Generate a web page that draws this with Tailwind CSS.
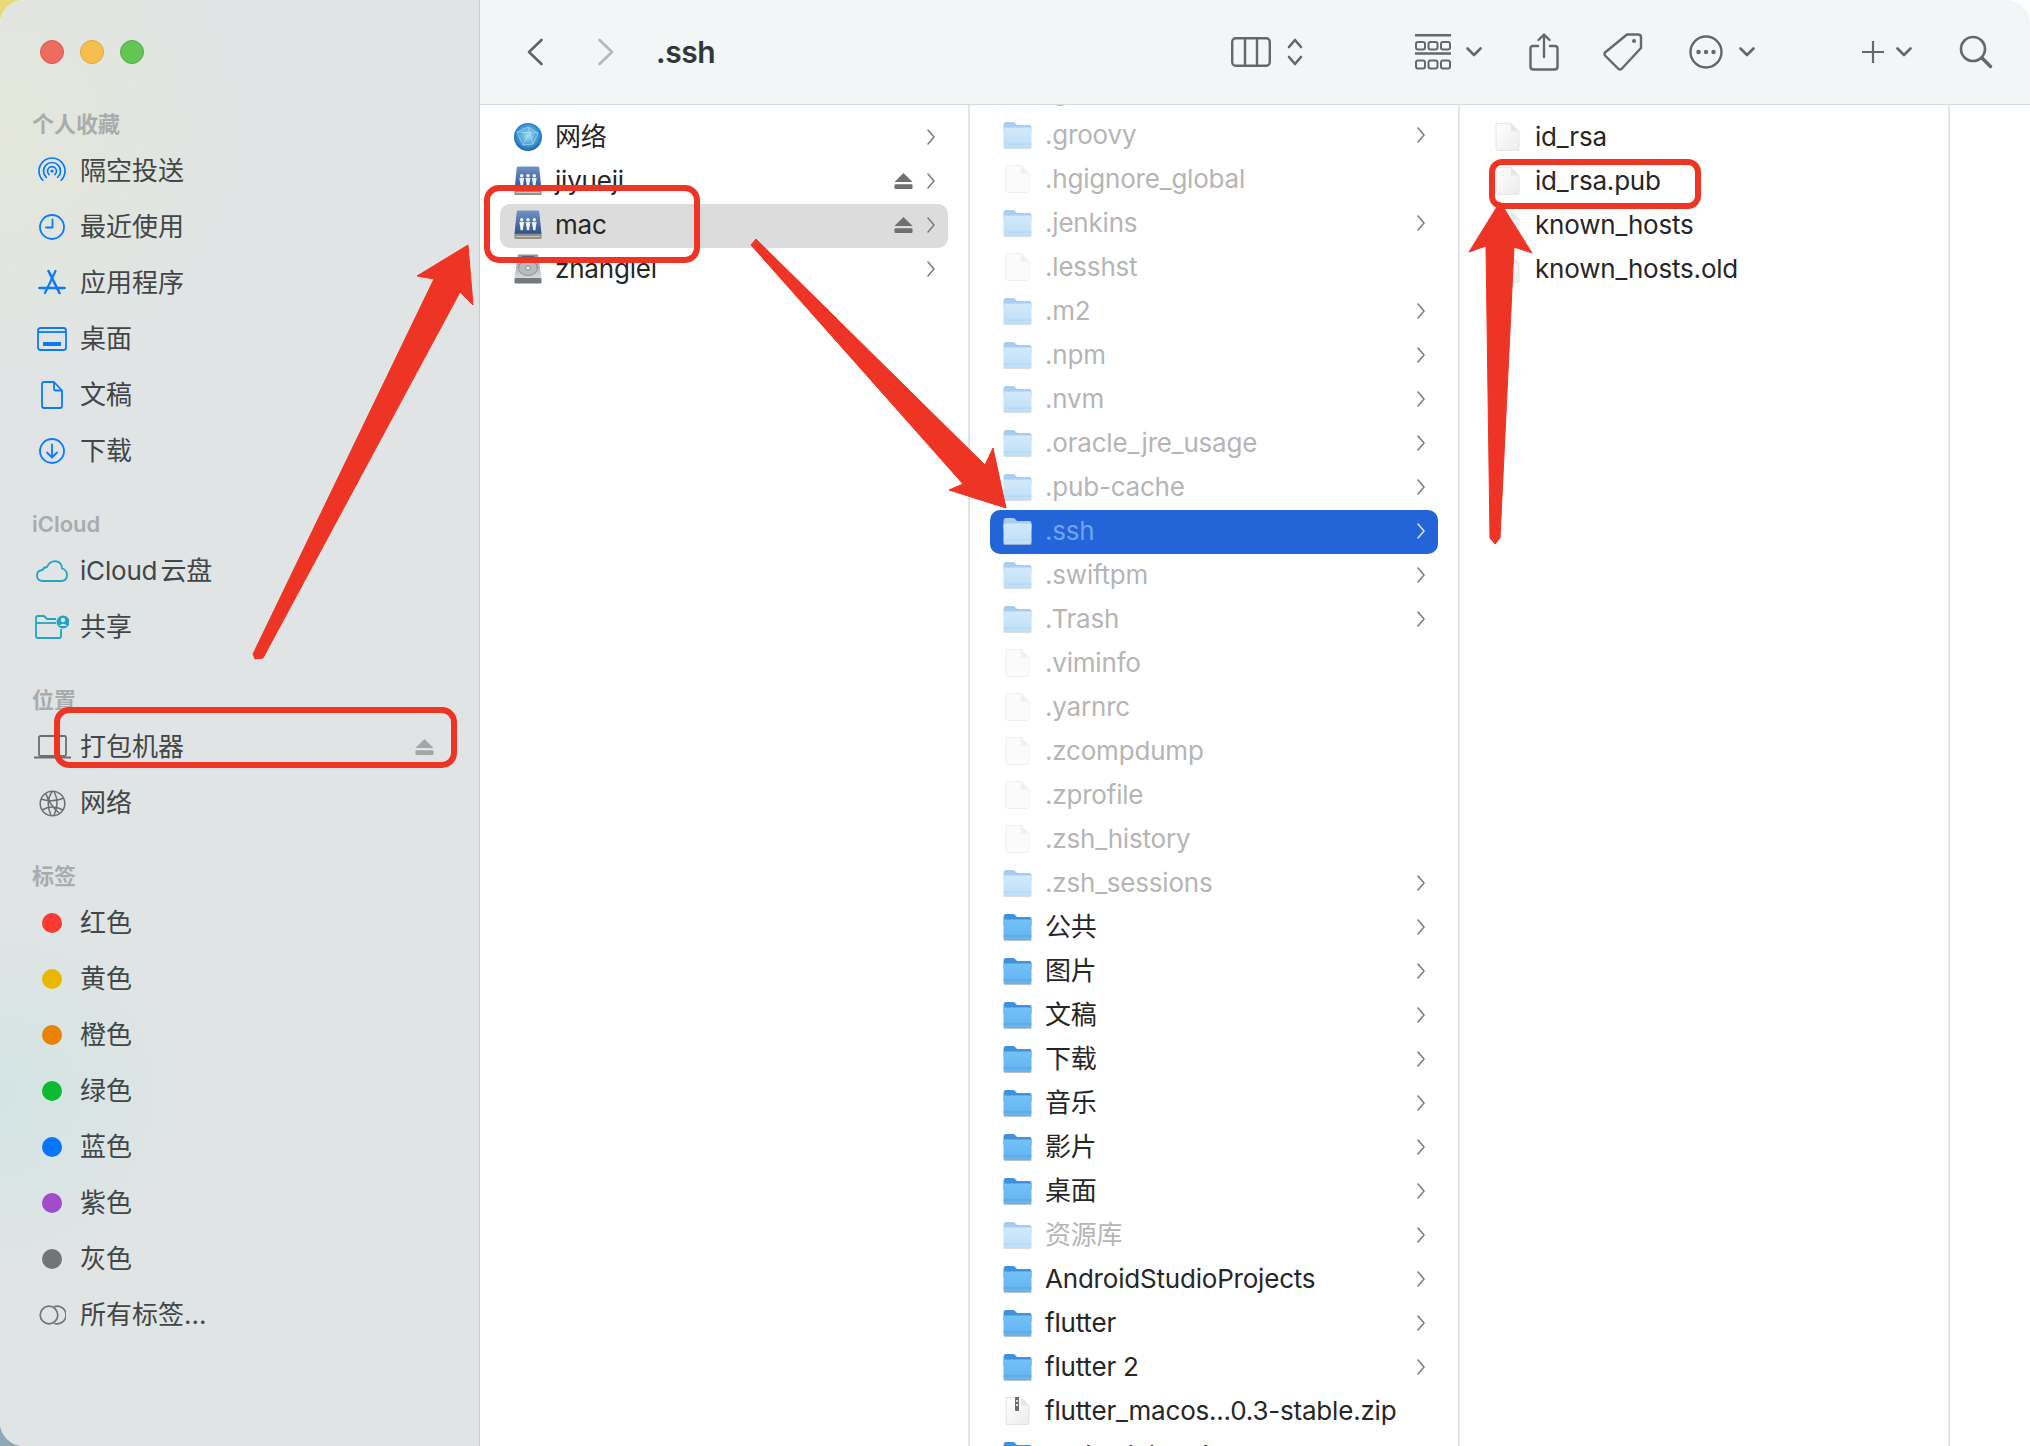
<!DOCTYPE html>
<html lang="zh-CN">
<head>
  <meta charset="UTF-8">
  <title>.ssh</title>
  <script src="https://cdn.jsdelivr.net/npm/@tailwindcss/browser@4"></script>
</head>
<body class="w-[2030px] h-[1446px] overflow-hidden relative bg-[radial-gradient(circle_at_0_0,#e7d97c_24px,transparent_25px),radial-gradient(circle_at_0_100%,#8ea9b4_24px,#ffffff_25px)] font-['Inter','Noto_Sans_CJK_SC',sans-serif]">
  <!-- shared icons: must not be display:none or the gradients stop resolving -->
  <svg class="absolute w-0 h-0">
    <defs>
      <linearGradient id="folderBody" x1="0" y1="0" x2="0" y2="1"><stop offset="0" stop-color="#74c1f7"/><stop offset="1" stop-color="#64b3f0"/></linearGradient>
      <linearGradient id="folderDim" x1="0" y1="0" x2="0" y2="1"><stop offset="0" stop-color="#d2e9fb"/><stop offset="1" stop-color="#bfdff7"/></linearGradient>
      <linearGradient id="fileBody" x1="0" y1="0" x2="1" y2="1"><stop offset="0" stop-color="#ffffff"/><stop offset="1" stop-color="#ececec"/></linearGradient>
      <linearGradient id="serverBody" x1="0" y1="0" x2="0" y2="1"><stop offset="0" stop-color="#7092c4"/><stop offset="1" stop-color="#2f4f88"/></linearGradient>
      <linearGradient id="diskBody" x1="0" y1="0" x2="0" y2="1"><stop offset="0" stop-color="#8d9396"/><stop offset="1" stop-color="#d5d9db"/></linearGradient>
      <radialGradient id="globeBody" cx="0.5" cy="0.45" r="0.6"><stop offset="0" stop-color="#9fe0ee"/><stop offset="0.6" stop-color="#3c9ad6"/><stop offset="1" stop-color="#14519f"/></radialGradient>
    </defs>
    <symbol id="folder" viewBox="0 0 29 28">
      <rect x="0.5" y="25" width="28" height="3" rx="1.5" fill="#8b99a3" opacity="0.6"/>
      <path d="M0.5 5 Q0.5 1 3 1 H10 Q12 1 13 3 L14 4 H26.5 Q28.5 4 28.5 6 V12 H0.5Z" fill="#3f91dc"/>
      <path d="M0.5 8 Q0.5 6.5 2 6.5 H27 Q28.5 6.5 28.5 8 V25 Q28.5 27 26.5 27 H2.5 Q0.5 27 0.5 25Z" fill="url(#folderBody)"/>
      <path d="M0.5 23 H28.5" stroke="#4f9fe0" stroke-width="0.8"/>
    </symbol>
    <symbol id="folder-dim" viewBox="0 0 29 28">
      <rect x="0.5" y="25" width="28" height="3" rx="1.5" fill="#c5ced4" opacity="0.7"/>
      <path d="M0.5 5 Q0.5 1 3 1 H10 Q12 1 13 3 L14 4 H26.5 Q28.5 4 28.5 6 V12 H0.5Z" fill="#a9cdee"/>
      <path d="M0.5 8 Q0.5 6.5 2 6.5 H27 Q28.5 6.5 28.5 8 V25 Q28.5 27 26.5 27 H2.5 Q0.5 27 0.5 25Z" fill="url(#folderDim)"/>
      <path d="M0.5 23 H28.5" stroke="#add4f2" stroke-width="0.8"/>
    </symbol>
    <symbol id="file" viewBox="0 0 29 30">
      <path d="M3 1.5 H18 L26 9.5 V27 Q26 28.5 24.5 28.5 H4.5 Q3 28.5 3 27Z" fill="url(#fileBody)" stroke="#e0e0e0" stroke-width="0.8"/>
      <path d="M18 1.5 V8 Q18 9.5 19.5 9.5 H26Z" fill="#e6e6e6"/>
    </symbol>
    <symbol id="file-dim" viewBox="0 0 29 30">
      <path d="M3 1.5 H18 L26 9.5 V27 Q26 28.5 24.5 28.5 H4.5 Q3 28.5 3 27Z" fill="#fbfbfb" stroke="#eeeeee" stroke-width="0.8"/>
      <path d="M18 1.5 V8 Q18 9.5 19.5 9.5 H26Z" fill="#f0f0f0"/>
    </symbol>
    <symbol id="zip" viewBox="0 0 29 30">
      <path d="M3 1.5 H18 L26 9.5 V27 Q26 28.5 24.5 28.5 H4.5 Q3 28.5 3 27Z" fill="url(#fileBody)" stroke="#dddddd" stroke-width="0.8"/>
      <path d="M18 1.5 V8 Q18 9.5 19.5 9.5 H26Z" fill="#e6e6e6"/>
      <rect x="12" y="1" width="4" height="14" rx="1" fill="#6c6c6c"/>
      <rect x="13" y="4" width="2" height="2" fill="#dddddd"/><rect x="13" y="8" width="2" height="2" fill="#dddddd"/>
    </symbol>
    <symbol id="chev" viewBox="0 0 10 18">
      <path d="M2 2 L8 9 L2 16" fill="none" stroke="currentColor" stroke-width="1.6" stroke-linecap="round" stroke-linejoin="round"/>
    </symbol>
    <symbol id="eject" viewBox="0 0 20 18">
      <path d="M10 0.5 L19.5 10 H0.5Z" fill="currentColor"/>
      <rect x="0.5" y="12.5" width="19" height="5" rx="1.2" fill="currentColor"/>
    </symbol>
    <symbol id="caret" viewBox="0 0 16 10">
      <path d="M1.5 1.5 L8 8 L14.5 1.5" fill="none" stroke="#646869" stroke-width="2.6" stroke-linecap="round" stroke-linejoin="round"/>
    </symbol>
    <symbol id="server" viewBox="0 0 29 31">
      <path d="M4.5 0.5 H24.5 Q26 0.5 26.2 2 L28.5 25 H0.5 L2.8 2 Q3 0.5 4.5 0.5Z" fill="url(#serverBody)"/>
      <rect x="0.5" y="24.5" width="28" height="5.5" rx="1" fill="#8f8f85"/>
      <rect x="2" y="27" width="25" height="1" fill="#cfcfc6"/>
      <g fill="#eef3fa">
        <circle cx="8" cy="10" r="1.8"/><circle cx="14.5" cy="10" r="1.8"/><circle cx="21" cy="10" r="1.8"/>
        <path d="M5.5 12.5 H10.5 L9.5 18 L9.2 21 H6.8 L6.5 18Z"/>
        <path d="M12 12.5 H17 L16 18 L15.7 21 H13.3 L13 18Z"/>
        <path d="M18.5 12.5 H23.5 L22.5 18 L22.2 21 H19.8 L19.5 18Z"/>
      </g>
    </symbol>
  </svg>

  <div class="w-[2030px] h-[1446px] rounded-[24px] overflow-hidden flex bg-white">
    <!-- sidebar -->
    <aside class="w-[480px] shrink-0 border-r border-[#c9cccc] bg-[#e0e4e5] bg-[radial-gradient(circle_at_0_130px,#e4e7da_0,transparent_260px),radial-gradient(circle_at_0_1095px,#d3e4e4_0,transparent_175px)] pl-[32px] text-[26px] leading-[36px] text-[#434647]">
      <div class="h-[106px] pt-[40px] pl-[8px] flex gap-[16px]">
        <span class="size-[24px] rounded-full bg-[#ee6b62] border border-[#d9584f]"></span>
        <span class="size-[24px] rounded-full bg-[#f6bd4f] border border-[#e0a63c]"></span>
        <span class="size-[24px] rounded-full bg-[#62c554] border border-[#4fae44]"></span>
      </div>

      <h2 class="h-[36px] flex items-center text-[22px] font-semibold text-[#a9acac]">个人收藏</h2>
      <div class="mt-px">
        <div class="h-[56px] flex items-center gap-[8px]"><span class="w-10 flex justify-center"><svg class="size-[28px]" viewBox="0 0 28 28" fill="none" stroke="#0a7aff" stroke-width="1.7" stroke-linecap="round"><path d="M4.8 23.2 A13 13 0 1 1 23.2 23.2"/><path d="M8.4 20.4 A8.5 8.5 0 1 1 19.6 20.4"/><path d="M11 17.5 A4.5 4.5 0 1 1 17 17.5"/><circle cx="14" cy="14" r="1.6" fill="#0a7aff" stroke="none"/></svg></span>隔空投送</div>
        <div class="h-[56px] flex items-center gap-[8px]"><span class="w-10 flex justify-center"><svg class="size-[28px]" viewBox="0 0 28 28" fill="none" stroke="#0a7aff" stroke-width="1.8" stroke-linecap="round" stroke-linejoin="round"><circle cx="14" cy="14" r="12"/><path d="M14.5 6.5 V14.5 H8"/></svg></span>最近使用</div>
        <div class="h-[56px] flex items-center gap-[8px]"><span class="w-10 flex justify-center"><svg class="size-[28px]" viewBox="0 0 28 28" fill="none" stroke="#0a7aff" stroke-width="2.6" stroke-linecap="round"><path d="M10.5 2 L21.5 24"/><path d="M17.5 2 L7 24" stroke-width="2.2"/><path d="M1.5 19 H26.5" stroke-width="2.6"/></svg></span>应用程序</div>
        <div class="h-[56px] flex items-center gap-[8px]"><span class="w-10 flex justify-center"><svg class="w-[30px] h-[24px]" viewBox="0 0 30 24" fill="none" stroke="#0a7aff" stroke-width="1.8"><rect x="1" y="1" width="28" height="22" rx="2.5"/><path d="M1 5 H29"/><rect x="6" y="15" width="18" height="4" fill="#0a7aff" stroke="none"/></svg></span>桌面</div>
        <div class="h-[56px] flex items-center gap-[8px]"><span class="w-10 flex justify-center"><svg class="w-[22px] h-[28px]" viewBox="0 0 22 28" fill="none" stroke="#0a7aff" stroke-width="1.8" stroke-linejoin="round"><path d="M1 3 Q1 1 3 1 H13 L21 9.5 V25 Q21 27 19 27 H3 Q1 27 1 25Z"/><path d="M13 1 V8 Q13 9.5 14.5 9.5 H21"/></svg></span>文稿</div>
        <div class="h-[56px] flex items-center gap-[8px]"><span class="w-10 flex justify-center"><svg class="size-[28px]" viewBox="0 0 28 28" fill="none" stroke="#0a7aff" stroke-width="1.8" stroke-linecap="round" stroke-linejoin="round"><circle cx="14" cy="14" r="12"/><path d="M14 7.5 V20 M9 15.5 L14 20.5 L19 15.5"/></svg></span>下载</div>
      </div>

      <h2 class="mt-[27px] h-[36px] flex items-center text-[22px] font-semibold text-[#a9acac]">iCloud</h2>
      <div class="mt-px">
        <div class="h-[56px] flex items-center gap-[8px]"><span class="w-10 flex justify-center"><svg class="w-[32px] h-[22px]" viewBox="0 0 32 22" fill="none" stroke="#22a5c2" stroke-width="1.8" stroke-linejoin="round"><path d="M7 21 Q1 21 1 15.5 Q1 10.5 6.5 10 Q8 7 11 7 Q13 2 18.5 1.2 Q25.5 1.2 26 8.5 Q31 10 31 15 Q31 21 25 21Z"/></svg></span><span class="tracking-[-0.2px] [word-spacing:-4px]">iCloud 云盘</span></div>
        <div class="h-[56px] flex items-center gap-[8px]"><span class="w-10 flex justify-center"><svg class="w-[34px] h-[24px]" viewBox="0 0 34 24" fill="none" stroke="#22a5c2" stroke-width="1.8" stroke-linejoin="round"><path d="M26 14 V21 Q26 23 24 23 H3 Q1 23 1 21 V3 Q1 1 3 1 H9 L12 4 H21"/><path d="M1 8 H21"/><circle cx="28" cy="7" r="6.5" fill="#22a5c2" stroke="none"/><circle cx="28" cy="5" r="2.2" fill="#e0e4e5" stroke="none"/><path d="M24 11 Q28 6.5 32 11Z" fill="#e0e4e5" stroke="none"/></svg></span>共享</div>
      </div>

      <h2 class="mt-[27px] h-[36px] flex items-center text-[22px] font-semibold text-[#a9acac]">位置</h2>
      <div class="mt-px">
        <div class="h-[56px] flex items-center gap-[8px] pr-[45px]"><span class="w-10 flex justify-center"><svg class="w-[37px] h-[24px]" viewBox="0 0 37 24" fill="none" stroke="#6b6e6f" stroke-width="1.8"><rect x="5" y="1" width="27" height="20" rx="1.5"/><path d="M0 22.5 H37" stroke-width="2.2"/></svg></span><span class="flex-1">打包机器</span><svg class="w-[19px] h-[18px] text-[#a3a6a7]"><use href="#eject"/></svg></div>
        <div class="h-[56px] flex items-center gap-[8px]"><span class="w-10 flex justify-center"><svg class="size-[27px]" viewBox="0 0 27 27" fill="none" stroke="#6b6e6f" stroke-width="1.5"><circle cx="13.5" cy="13.5" r="12.3"/><path d="M2 9 Q13 13 25 8 M3 20 Q13 14 24 20 M13 1.5 Q6 12 12 25.5 M15 1.5 Q21 12 15 25.5 M7 4 Q10 14 20 23"/></svg></span>网络</div>
      </div>

      <h2 class="mt-[27px] h-[36px] flex items-center text-[22px] font-semibold text-[#a9acac]">标签</h2>
      <div class="mt-px">
        <div class="h-[56px] flex items-center gap-[8px]"><span class="w-10 flex justify-center"><span class="size-[20px] rounded-full bg-[#fb3b30]"></span></span>红色</div>
        <div class="h-[56px] flex items-center gap-[8px]"><span class="w-10 flex justify-center"><span class="size-[20px] rounded-full bg-[#e8b800]"></span></span>黄色</div>
        <div class="h-[56px] flex items-center gap-[8px]"><span class="w-10 flex justify-center"><span class="size-[20px] rounded-full bg-[#e88200]"></span></span>橙色</div>
        <div class="h-[56px] flex items-center gap-[8px]"><span class="w-10 flex justify-center"><span class="size-[20px] rounded-full bg-[#0dbb33]"></span></span>绿色</div>
        <div class="h-[56px] flex items-center gap-[8px]"><span class="w-10 flex justify-center"><span class="size-[20px] rounded-full bg-[#0a75ff]"></span></span>蓝色</div>
        <div class="h-[56px] flex items-center gap-[8px]"><span class="w-10 flex justify-center"><span class="size-[20px] rounded-full bg-[#a24ccb]"></span></span>紫色</div>
        <div class="h-[56px] flex items-center gap-[8px]"><span class="w-10 flex justify-center"><span class="size-[20px] rounded-full bg-[#737378]"></span></span>灰色</div>
        <div class="h-[56px] flex items-center gap-[8px]"><span class="w-10 flex justify-center"><svg class="w-[27px] h-[20px]" viewBox="0 0 27 20" fill="none" stroke="#727576" stroke-width="1.7"><circle cx="10" cy="10" r="8.8"/><path d="M15 1.8 A8.8 8.8 0 1 1 15 18.2"/></svg></span>所有标签...</div>
      </div>
    </aside>

    <main class="flex-1 min-w-0 flex flex-col">
      <!-- toolbar -->
      <header class="h-[105px] shrink-0 relative z-10 bg-[#f3f6f7] border-b border-[#d8dbdb] flex items-center pl-[46px] text-[#646869]">
        <svg class="w-[18px] h-[28px]" viewBox="0 0 18 28" fill="none" stroke="#5f6364" stroke-width="2.6" stroke-linecap="round" stroke-linejoin="round"><path d="M15.5 2 L3 14 L15.5 26"/></svg>
        <svg class="w-[18px] h-[28px] ml-[53px]" viewBox="0 0 18 28" fill="none" stroke="#b3b7b8" stroke-width="2.6" stroke-linecap="round" stroke-linejoin="round"><path d="M2.5 2 L15 14 L2.5 26"/></svg>
        <h1 class="ml-[41px] w-[575px] text-[30px] font-semibold tracking-[-0.4px] text-[#33373a]">.ssh</h1>
        <svg class="w-[40px] h-[30px]" viewBox="0 0 40 30" fill="none" stroke="#646869" stroke-width="2.4"><rect x="1.2" y="1.2" width="37.6" height="27.6" rx="3.5"/><path d="M14 1.2 V28.8 M26 1.2 V28.8"/></svg>
        <svg class="w-[16px] h-[30px] ml-[16px]" viewBox="0 0 16 30" fill="none" stroke="#646869" stroke-width="2.6" stroke-linecap="round" stroke-linejoin="round"><path d="M2 10 L8 3 L14 10 M2 20 L8 27 L14 20"/></svg>
        <svg class="w-[36px] h-[36px] ml-[112px]" viewBox="0 0 36 36" fill="none" stroke="#646869" stroke-width="2"><path d="M0 1.2 H36 M0 19.5 H36" stroke-width="2.4"/><rect x="1" y="8" width="9" height="7.5" rx="2"/><rect x="13.5" y="8" width="9" height="7.5" rx="2"/><rect x="26" y="8" width="9" height="7.5" rx="2"/><rect x="1" y="26.5" width="9" height="8" rx="2"/><rect x="13.5" y="26.5" width="9" height="8" rx="2"/><rect x="26" y="26.5" width="9" height="8" rx="2"/></svg>
        <svg class="w-[16px] h-[10px] ml-[15px]"><use href="#caret"/></svg>
        <svg class="w-[30px] h-[38px] ml-[47px]" viewBox="0 0 30 38" fill="none" stroke="#646869" stroke-width="2.4" stroke-linecap="round" stroke-linejoin="round"><path d="M9 13 H4 Q1.5 13 1.5 15.5 V33.5 Q1.5 36.5 4.5 36.5 H25.5 Q28.5 36.5 28.5 33.5 V15.5 Q28.5 13 26 13 H21"/><path d="M15 24 V2 M9.5 7 L15 1.5 L20.5 7"/></svg>
        <svg class="w-[40px] h-[38px] ml-[44px]" viewBox="0 0 40 38" fill="none" stroke="#646869" stroke-width="2.4" stroke-linejoin="round"><path d="M24 1.5 H35 Q38 1.5 38 4.5 V15 L18.5 36 Q17 37 15.5 36 L2 22.5 Q1 21 2 19.5Z"/><circle cx="31" cy="8" r="2" fill="#646869" stroke="none"/></svg>
        <svg class="size-[34px] ml-[46px]" viewBox="0 0 34 34" fill="none"><circle cx="17" cy="17" r="15.5" stroke="#646869" stroke-width="2.4"/><circle cx="9.5" cy="17" r="2.2" fill="#646869"/><circle cx="17" cy="17" r="2.2" fill="#646869"/><circle cx="24.5" cy="17" r="2.2" fill="#646869"/></svg>
        <svg class="w-[16px] h-[10px] ml-[16px]"><use href="#caret"/></svg>
        <svg class="size-[22px] ml-[107px]" viewBox="0 0 22 22" fill="none" stroke="#646869" stroke-width="2.2"><path d="M11 0 V22 M0 11 H22"/></svg>
        <svg class="w-[16px] h-[10px] ml-[12px]"><use href="#caret"/></svg>
        <svg class="size-[34px] ml-[47px]" viewBox="0 0 34 34" fill="none" stroke="#646869" stroke-linecap="round"><circle cx="14" cy="14" r="12" stroke-width="2.6"/><path d="M23 23 L31.5 31.5" stroke-width="3.4"/></svg>
      </header>

      <div class="flex-1 min-h-0 flex text-[26px] leading-[36px] tracking-[-0.2px] text-[#262626]">
        <!-- column 1 -->
        <section class="w-[490px] shrink-0 border-r-2 border-[#e4e4e4] pt-[11px] px-[20px]">
          <div class="h-[44px] pb-[2px] flex items-center pl-[14px] pr-[12px] gap-[13px]">
            <svg class="size-[28px]" viewBox="0 0 28 28" fill="none"><circle cx="14" cy="14" r="14" fill="url(#globeBody)"/><path d="M3 9 L14 4 L24 10 L19 21 L9 22 L3 9 M14 4 L19 21 M3 9 L24 10 M9 22 L14 12" stroke="#d8f1fa" stroke-width="0.7" opacity="0.7"/></svg>
            <span class="flex-1">网络</span>
            <svg class="w-[10px] h-[18px] text-[#7e7e7e]"><use href="#chev"/></svg>
          </div>
          <div class="h-[44px] pb-[2px] flex items-center pl-[14px] pr-[12px] gap-[13px]">
            <svg class="w-[28px] h-[30px]"><use href="#server"/></svg>
            <span class="flex-1">jiyueji</span>
            <svg class="w-[19px] h-[18px] text-[#6f6f6f]"><use href="#eject"/></svg>
            <svg class="w-[10px] h-[18px] text-[#7e7e7e]"><use href="#chev"/></svg>
          </div>
          <div class="h-[44px] pb-[2px] flex items-center pl-[14px] pr-[12px] gap-[13px] rounded-[10px] bg-[#dcdcdc]">
            <svg class="w-[28px] h-[30px]"><use href="#server"/></svg>
            <span class="flex-1">mac</span>
            <svg class="w-[19px] h-[18px] text-[#6f6f6f]"><use href="#eject"/></svg>
            <svg class="w-[10px] h-[18px] text-[#7e7e7e]"><use href="#chev"/></svg>
          </div>
          <div class="h-[44px] pb-[2px] flex items-center pl-[14px] pr-[12px] gap-[13px]">
            <svg class="w-[28px] h-[30px]" viewBox="0 0 28 30" fill="none"><path d="M4 0.5 H24 L27.5 24 H0.5Z" fill="url(#diskBody)"/><rect x="0.5" y="24" width="27" height="5.5" rx="1" fill="#77797a"/><rect x="8" y="2" width="12" height="3" fill="#5f6264"/><ellipse cx="14" cy="14" rx="9.5" ry="7.5" fill="#b6bbbd" stroke="#8c9193"/><ellipse cx="14" cy="14" rx="2.5" ry="2" fill="#e8eaea" stroke="#8c9193"/></svg>
            <span class="flex-1">zhanglei</span>
            <svg class="w-[10px] h-[18px] text-[#7e7e7e]"><use href="#chev"/></svg>
          </div>
        </section>

        <!-- column 2, scrolled -->
        <section class="w-[490px] shrink-0 border-r-2 border-[#e4e4e4] px-[20px] overflow-hidden">
          <div class="-mt-[35px]">
            <div class="h-[44px] pb-[2px] flex items-center pl-[13px] pr-[12px] gap-[13px] text-[#b5b5b5]"><svg class="w-[29px] h-[28px]"><use href="#folder-dim"/></svg><span class="flex-1">.gradle</span><svg class="w-[10px] h-[18px] text-[#7e7e7e]"><use href="#chev"/></svg></div>
            <div class="h-[44px] pb-[2px] flex items-center pl-[13px] pr-[12px] gap-[13px] text-[#b5b5b5]"><svg class="w-[29px] h-[28px]"><use href="#folder-dim"/></svg><span class="flex-1">.groovy</span><svg class="w-[10px] h-[18px] text-[#7e7e7e]"><use href="#chev"/></svg></div>
            <div class="h-[44px] pb-[2px] flex items-center pl-[13px] pr-[12px] gap-[13px] text-[#b5b5b5]"><svg class="w-[29px] h-[30px]"><use href="#file-dim"/></svg><span class="flex-1">.hgignore_global</span></div>
            <div class="h-[44px] pb-[2px] flex items-center pl-[13px] pr-[12px] gap-[13px] text-[#b5b5b5]"><svg class="w-[29px] h-[28px]"><use href="#folder-dim"/></svg><span class="flex-1">.jenkins</span><svg class="w-[10px] h-[18px] text-[#7e7e7e]"><use href="#chev"/></svg></div>
            <div class="h-[44px] pb-[2px] flex items-center pl-[13px] pr-[12px] gap-[13px] text-[#b5b5b5]"><svg class="w-[29px] h-[30px]"><use href="#file-dim"/></svg><span class="flex-1">.lesshst</span></div>
            <div class="h-[44px] pb-[2px] flex items-center pl-[13px] pr-[12px] gap-[13px] text-[#b5b5b5]"><svg class="w-[29px] h-[28px]"><use href="#folder-dim"/></svg><span class="flex-1">.m2</span><svg class="w-[10px] h-[18px] text-[#7e7e7e]"><use href="#chev"/></svg></div>
            <div class="h-[44px] pb-[2px] flex items-center pl-[13px] pr-[12px] gap-[13px] text-[#b5b5b5]"><svg class="w-[29px] h-[28px]"><use href="#folder-dim"/></svg><span class="flex-1">.npm</span><svg class="w-[10px] h-[18px] text-[#7e7e7e]"><use href="#chev"/></svg></div>
            <div class="h-[44px] pb-[2px] flex items-center pl-[13px] pr-[12px] gap-[13px] text-[#b5b5b5]"><svg class="w-[29px] h-[28px]"><use href="#folder-dim"/></svg><span class="flex-1">.nvm</span><svg class="w-[10px] h-[18px] text-[#7e7e7e]"><use href="#chev"/></svg></div>
            <div class="h-[44px] pb-[2px] flex items-center pl-[13px] pr-[12px] gap-[13px] text-[#b5b5b5]"><svg class="w-[29px] h-[28px]"><use href="#folder-dim"/></svg><span class="flex-1">.oracle_jre_usage</span><svg class="w-[10px] h-[18px] text-[#7e7e7e]"><use href="#chev"/></svg></div>
            <div class="h-[44px] pb-[2px] flex items-center pl-[13px] pr-[12px] gap-[13px] text-[#b5b5b5]"><svg class="w-[29px] h-[28px]"><use href="#folder-dim"/></svg><span class="flex-1">.pub-cache</span><svg class="w-[10px] h-[18px] text-[#7e7e7e]"><use href="#chev"/></svg></div>
            <div class="h-[44px] pb-[2px] flex items-center pl-[13px] pr-[12px] gap-[13px] rounded-[10px] bg-[#2364d9] text-[#6fa3ee]"><svg class="w-[29px] h-[28px]"><use href="#folder-dim"/></svg><span class="flex-1">.ssh</span><svg class="w-[10px] h-[18px] text-[#d5e3f9]"><use href="#chev"/></svg></div>
            <div class="h-[44px] pb-[2px] flex items-center pl-[13px] pr-[12px] gap-[13px] text-[#b5b5b5]"><svg class="w-[29px] h-[28px]"><use href="#folder-dim"/></svg><span class="flex-1">.swiftpm</span><svg class="w-[10px] h-[18px] text-[#7e7e7e]"><use href="#chev"/></svg></div>
            <div class="h-[44px] pb-[2px] flex items-center pl-[13px] pr-[12px] gap-[13px] text-[#b5b5b5]"><svg class="w-[29px] h-[28px]"><use href="#folder-dim"/></svg><span class="flex-1">.Trash</span><svg class="w-[10px] h-[18px] text-[#7e7e7e]"><use href="#chev"/></svg></div>
            <div class="h-[44px] pb-[2px] flex items-center pl-[13px] pr-[12px] gap-[13px] text-[#b5b5b5]"><svg class="w-[29px] h-[30px]"><use href="#file-dim"/></svg><span class="flex-1">.viminfo</span></div>
            <div class="h-[44px] pb-[2px] flex items-center pl-[13px] pr-[12px] gap-[13px] text-[#b5b5b5]"><svg class="w-[29px] h-[30px]"><use href="#file-dim"/></svg><span class="flex-1">.yarnrc</span></div>
            <div class="h-[44px] pb-[2px] flex items-center pl-[13px] pr-[12px] gap-[13px] text-[#b5b5b5]"><svg class="w-[29px] h-[30px]"><use href="#file-dim"/></svg><span class="flex-1">.zcompdump</span></div>
            <div class="h-[44px] pb-[2px] flex items-center pl-[13px] pr-[12px] gap-[13px] text-[#b5b5b5]"><svg class="w-[29px] h-[30px]"><use href="#file-dim"/></svg><span class="flex-1">.zprofile</span></div>
            <div class="h-[44px] pb-[2px] flex items-center pl-[13px] pr-[12px] gap-[13px] text-[#b5b5b5]"><svg class="w-[29px] h-[30px]"><use href="#file-dim"/></svg><span class="flex-1">.zsh_history</span></div>
            <div class="h-[44px] pb-[2px] flex items-center pl-[13px] pr-[12px] gap-[13px] text-[#b5b5b5]"><svg class="w-[29px] h-[28px]"><use href="#folder-dim"/></svg><span class="flex-1">.zsh_sessions</span><svg class="w-[10px] h-[18px] text-[#7e7e7e]"><use href="#chev"/></svg></div>
            <div class="h-[44px] pb-[2px] flex items-center pl-[13px] pr-[12px] gap-[13px]"><svg class="w-[29px] h-[28px]"><use href="#folder"/></svg><span class="flex-1">公共</span><svg class="w-[10px] h-[18px] text-[#7e7e7e]"><use href="#chev"/></svg></div>
            <div class="h-[44px] pb-[2px] flex items-center pl-[13px] pr-[12px] gap-[13px]"><svg class="w-[29px] h-[28px]"><use href="#folder"/></svg><span class="flex-1">图片</span><svg class="w-[10px] h-[18px] text-[#7e7e7e]"><use href="#chev"/></svg></div>
            <div class="h-[44px] pb-[2px] flex items-center pl-[13px] pr-[12px] gap-[13px]"><svg class="w-[29px] h-[28px]"><use href="#folder"/></svg><span class="flex-1">文稿</span><svg class="w-[10px] h-[18px] text-[#7e7e7e]"><use href="#chev"/></svg></div>
            <div class="h-[44px] pb-[2px] flex items-center pl-[13px] pr-[12px] gap-[13px]"><svg class="w-[29px] h-[28px]"><use href="#folder"/></svg><span class="flex-1">下载</span><svg class="w-[10px] h-[18px] text-[#7e7e7e]"><use href="#chev"/></svg></div>
            <div class="h-[44px] pb-[2px] flex items-center pl-[13px] pr-[12px] gap-[13px]"><svg class="w-[29px] h-[28px]"><use href="#folder"/></svg><span class="flex-1">音乐</span><svg class="w-[10px] h-[18px] text-[#7e7e7e]"><use href="#chev"/></svg></div>
            <div class="h-[44px] pb-[2px] flex items-center pl-[13px] pr-[12px] gap-[13px]"><svg class="w-[29px] h-[28px]"><use href="#folder"/></svg><span class="flex-1">影片</span><svg class="w-[10px] h-[18px] text-[#7e7e7e]"><use href="#chev"/></svg></div>
            <div class="h-[44px] pb-[2px] flex items-center pl-[13px] pr-[12px] gap-[13px]"><svg class="w-[29px] h-[28px]"><use href="#folder"/></svg><span class="flex-1">桌面</span><svg class="w-[10px] h-[18px] text-[#7e7e7e]"><use href="#chev"/></svg></div>
            <div class="h-[44px] pb-[2px] flex items-center pl-[13px] pr-[12px] gap-[13px] text-[#b5b5b5]"><svg class="w-[29px] h-[28px]"><use href="#folder-dim"/></svg><span class="flex-1">资源库</span><svg class="w-[10px] h-[18px] text-[#7e7e7e]"><use href="#chev"/></svg></div>
            <div class="h-[44px] pb-[2px] flex items-center pl-[13px] pr-[12px] gap-[13px]"><svg class="w-[29px] h-[28px]"><use href="#folder"/></svg><span class="flex-1">AndroidStudioProjects</span><svg class="w-[10px] h-[18px] text-[#7e7e7e]"><use href="#chev"/></svg></div>
            <div class="h-[44px] pb-[2px] flex items-center pl-[13px] pr-[12px] gap-[13px]"><svg class="w-[29px] h-[28px]"><use href="#folder"/></svg><span class="flex-1">flutter</span><svg class="w-[10px] h-[18px] text-[#7e7e7e]"><use href="#chev"/></svg></div>
            <div class="h-[44px] pb-[2px] flex items-center pl-[13px] pr-[12px] gap-[13px]"><svg class="w-[29px] h-[28px]"><use href="#folder"/></svg><span class="flex-1">flutter 2</span><svg class="w-[10px] h-[18px] text-[#7e7e7e]"><use href="#chev"/></svg></div>
            <div class="h-[44px] pb-[2px] flex items-center pl-[13px] pr-[12px] gap-[13px]"><svg class="w-[29px] h-[30px]"><use href="#zip"/></svg><span class="flex-1">flutter_macos...0.3-stable.zip</span></div>
            <div class="h-[44px] pb-[2px] flex items-center pl-[13px] pr-[12px] gap-[13px]"><svg class="w-[29px] h-[28px]"><use href="#folder"/></svg><span class="flex-1">node-debug.log</span></div>
          </div>
        </section>

        <!-- column 3 -->
        <section class="w-[490px] shrink-0 border-r-2 border-[#e4e4e4] pt-[11px] px-[20px]">
          <div class="h-[44px] pb-[2px] flex items-center pl-[13px] gap-[13px]"><svg class="w-[29px] h-[30px]"><use href="#file"/></svg>id_rsa</div>
          <div class="h-[44px] pb-[2px] flex items-center pl-[13px] gap-[13px]"><svg class="w-[29px] h-[30px]"><use href="#file"/></svg>id_rsa.pub</div>
          <div class="h-[44px] pb-[2px] flex items-center pl-[13px] gap-[13px]"><svg class="w-[29px] h-[30px]"><use href="#file"/></svg>known_hosts</div>
          <div class="h-[44px] pb-[2px] flex items-center pl-[13px] gap-[13px]"><svg class="w-[29px] h-[30px]"><use href="#file"/></svg>known_hosts.old</div>
        </section>
        <section class="flex-1"></section>
      </div>
    </main>
  </div>

  <!-- red annotations drawn over the screenshot -->
  <svg class="absolute inset-0 z-20 pointer-events-none" width="2030" height="1446" viewBox="0 0 2030 1446" fill="#ee3424" stroke="#ee3424" stroke-linejoin="round">
    <g fill="none" stroke-width="6">
      <rect x="57" y="710" width="397" height="55" rx="12"/>
      <rect x="487" y="188" width="210" height="72" rx="12"/>
      <rect x="1492" y="162" width="206" height="44" rx="10"/>
    </g>
    <polygon stroke-width="1" points="468,245 473,305 460,292 263,658 255,659 253,654 434,279 417,276"/>
    <polygon stroke-width="1" points="1006,508 949,490 963,484 751,245 756,239 985,465 993,448"/>
    <polygon stroke-width="1" points="1500,202 1532,253 1514,247 1500,538 1495,544 1490,538 1486,246 1469,252"/>
  </svg>
</body>
</html>
